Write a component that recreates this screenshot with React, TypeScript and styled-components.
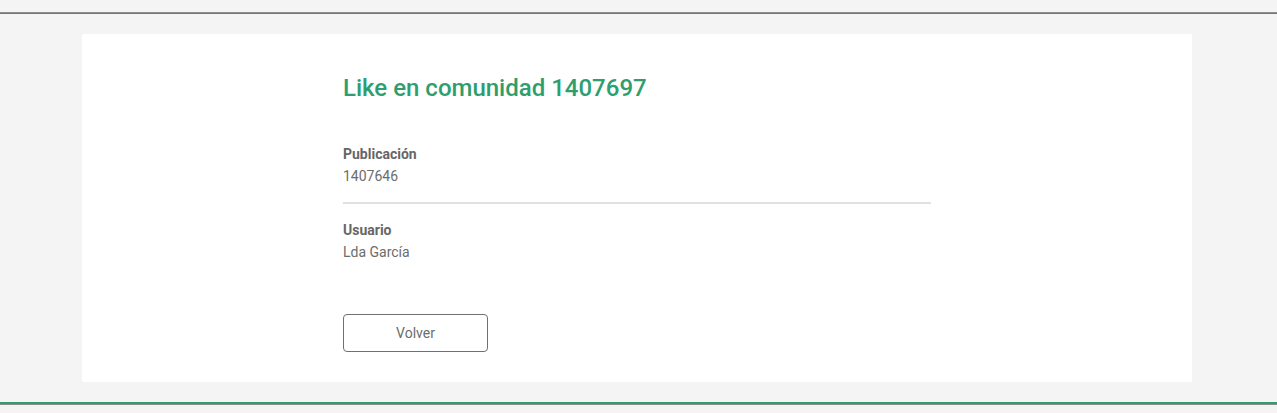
import React from 'react';
import styled, { createGlobalStyle } from 'styled-components';

const colors = {
    page: '#f4f4f4',
    white: '#ffffff',
    green: '#2e9e6e',
    text: '#6c6c6c',
    label: '#666666',
    divider: '#e0e0e0',
    border: '#707070',
    headerLine: '#8c8c8c',
};

const GlobalStyle = createGlobalStyle`
    html, body {
        margin: 0;
        padding: 0;
        background: ${colors.page};
        font-family: Roboto, "Noto Sans", Arial, sans-serif;
    }
`;

const Page = styled.div`
    display: flex;
    flex-direction: column;
    background: ${colors.page};
`;

const TopBar = styled.div`
    height: 12px;
    border-bottom: 1px solid ${colors.headerLine};
    box-shadow: 0 1px 0 ${colors.green};
`;

const Main = styled.main`
    padding: 21px 85px 20px 82px;
`;

const Card = styled.section`
    background: ${colors.white};
    border-radius: 2px;
    padding: 38px 0 30px 261px;
`;

const Content = styled.div`
    width: 588px;
`;

const Title = styled.h1`
    margin: 0 0 40px;
    font-size: 24px;
    line-height: 32px;
    font-weight: 500;
    color: ${colors.green};
`;

interface IField {
    last?: boolean;
}

const Field = styled.div<IField>`
    display: flex;
    flex-direction: column;
    gap: 2px;
    padding-bottom: ${props => props.last ? '0' : '16px'};
    margin-bottom: ${props => props.last ? '0' : '16px'};
    border-bottom: ${props => props.last ? 'none' : `2px solid ${colors.divider}`};
`;

const Label = styled.div`
    font-size: 14px;
    line-height: 20px;
    font-weight: 700;
    color: ${colors.label};
`;

const Value = styled.div`
    font-size: 14px;
    line-height: 20px;
    color: ${colors.text};
`;

const Actions = styled.div`
    margin-top: 52px;
`;

const BackButton = styled.button`
    width: 145px;
    height: 38px;
    background: ${colors.white};
    border: 1px solid ${colors.border};
    border-radius: 4px;
    font-family: inherit;
    font-size: 14px;
    color: ${colors.text};
    cursor: pointer;
    :hover{
        background: ${colors.page};
    }
`;

const Footer = styled.div`
    height: 2px;
    background: ${colors.green};
    border-bottom: 1px solid ${colors.headerLine};
`;

const fields = [
    { label: 'Publicación', value: '1407646' },
    { label: 'Usuario', value: 'Lda García' },
];

const App = () => {
    return (
        <>
            <GlobalStyle/>
            <Page>
                <TopBar/>
                <Main>
                    <Card>
                        <Content>
                            <Title>Like en comunidad 1407697</Title>
                            {fields.map((each, i) => (
                                <Field key={i} last={i === fields.length - 1}>
                                    <Label>{each.label}</Label>
                                    <Value>{each.value}</Value>
                                </Field>
                            ))}
                            <Actions>
                                <BackButton>Volver</BackButton>
                            </Actions>
                        </Content>
                    </Card>
                </Main>
                <Footer/>
            </Page>
        </>
    );
}

export default App;
